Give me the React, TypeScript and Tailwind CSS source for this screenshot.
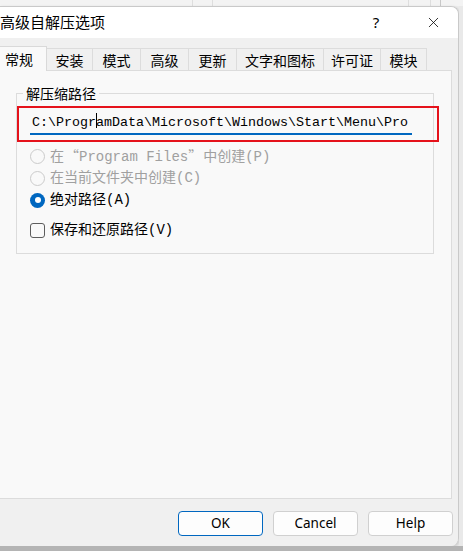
import { X } from "lucide-react";

const tabs = [
  { label: "常规", w: "w-[47px]" },
  { label: "安装", w: "w-[46px]" },
  { label: "模式", w: "w-[48px]" },
  { label: "高级", w: "w-[48px]" },
  { label: "更新", w: "w-[48px]" },
  { label: "文字和图标", w: "w-[87px]" },
  { label: "许可证", w: "w-[57px]" },
  { label: "模块", w: "w-[46px]" },
];

const RadioDot = ({ checked, disabled }: { checked?: boolean; disabled?: boolean }) =>
  checked ? (
    <span className="w-[15px] h-[15px] rounded-full bg-[#0067c0] flex items-center justify-center shrink-0">
      <span className="w-[6px] h-[6px] rounded-full bg-white" />
    </span>
  ) : (
    <span
      className={
        disabled
          ? "w-[15px] h-[15px] rounded-full border border-[#cbcbcb] bg-[#f9f9f9] shrink-0"
          : "w-[15px] h-[15px] rounded-full border border-[#5d5d5d] shrink-0"
      }
    />
  );

const Button = ({ label, primary }: { label: string; primary?: boolean }) => (
  <button
    className={
      primary
        ? "w-[85px] h-[25px] rounded-[4px] border border-[#0067c0] bg-[#fdfdfd] text-[13.5px] text-black"
        : "w-[85px] h-[25px] rounded-[4px] border border-[#d0d0d0] bg-[#fdfdfd] text-[13.5px] text-black"
    }
  >
    {label}
  </button>
);

export default function App() {
  return (
    <div className="w-[463px] h-[551px] overflow-hidden bg-[#ececec] flex flex-col font-['Noto_Sans','Noto_Sans_CJK_SC',sans-serif]">
      {/* window behind the dialog */}
      <div className="h-[6px] flex bg-[#f3f3f3] shrink-0">
        <div className="w-[192px]" />
        <div className="w-[20px] border-l border-[#dedede]" />
        <div className="w-[196px] border-l border-[#dedede]" />
        <div className="w-[22px] border-l border-[#dedede]" />
        <div className="w-[10px] border-l border-[#dedede]" />
        <div className="flex-1 border-l border-[#c8c8c8]" />
      </div>

      <div className="flex shrink-0">
        <div className="w-[459px] h-[540px] flex flex-col rounded-tr-[8px] rounded-br-[8px] border-t border-r border-[#c9c9c9] overflow-hidden shadow-[1px_1px_3px_rgba(0,0,0,0.15)]">
          {/* title bar */}
          <div className="h-[31px] bg-white flex items-center shrink-0">
            <span className="text-[15px] text-black font-['Noto_Sans_CJK_SC',sans-serif]">高级自解压选项</span>
            <span className="ml-auto text-[15px] text-black w-[20px] text-center">?</span>
            <span className="w-[72px] flex justify-center pl-[22px]">
              <X size={17} strokeWidth={1.1} className="text-black" />
            </span>
          </div>

          {/* body */}
          <div className="flex-1 bg-[#f0f0f0] flex flex-col font-['Noto_Sans_CJK_SC',sans-serif] text-[14px]">
            <div className="h-[32px] flex items-end shrink-0">
              {tabs.map((t, i) =>
                i === 0 ? (
                  <div
                    key={t.label}
                    className={`${t.w} h-[25px] -mb-px z-10 bg-[#f9f9f9] border-t border-r border-[#d9d9d9] flex items-center pl-[5px] leading-none text-black`}
                  >
                    {t.label}
                  </div>
                ) : (
                  <div
                    key={t.label}
                    className={`${t.w} h-[22px] bg-[#f0f0f0] border-t border-r border-[#dcdcdc] flex items-center justify-center leading-none text-black`}
                  >
                    {t.label}
                  </div>
                )
              )}
            </div>

            {/* tab panel */}
            <div className="w-[452px] h-[429px] bg-[#f9f9f9] border-t border-r border-b border-[#dcdcdc] shrink-0 pt-[12px] pl-[16px]">
              <fieldset className="w-[418px] min-w-0 border border-[#dcdcdc] pb-[12px]">
                <legend className="ml-[6px] px-[3px] leading-[20px] text-black">解压缩路径</legend>
                <div className="mt-[3px] w-[422px] h-[36px] border-2 border-[#e5121b] pl-[11px] pt-[5px]">
                  <div className="w-[382px] h-[22px] border-b-2 border-[#0067c0] pl-[2px] font-['Liberation_Mono',monospace] text-[13.33px] leading-[20px] text-black whitespace-nowrap overflow-hidden">
                    C:\Progr
                    <span className="inline-block w-px h-[15px] bg-black -mr-px align-[-2px]" />
                    amData\Microsoft\Windows\Start\Menu\Pro
                  </div>
                </div>
                <div className="mt-[3px] font-['Liberation_Mono','Noto_Sans_CJK_SC',monospace] text-[14px]">
                  <div className="h-[22px] flex items-center gap-[5px] pl-[13px] text-[#a0a0a0] whitespace-nowrap">
                    <RadioDot disabled />
                    <span>
                      在<span className="inline-block w-[15px] text-right font-['Noto_Sans_CJK_SC',sans-serif]">“</span>Program Files<span className="inline-block w-[15px] text-left font-['Noto_Sans_CJK_SC',sans-serif]">”</span>中创建(P)
                    </span>
                  </div>
                  <div className="h-[22px] flex items-center gap-[5px] pl-[13px] text-[#a0a0a0]">
                    <RadioDot disabled />
                    <span>在当前文件夹中创建(C)</span>
                  </div>
                  <div className="h-[22px] flex items-center gap-[5px] pl-[13px] text-black">
                    <RadioDot checked />
                    <span>绝对路径(A)</span>
                  </div>
                  <div className="mt-[8px] h-[22px] flex items-center gap-[5px] pl-[13px]">
                    <span className="w-[15px] h-[15px] rounded-[3px] border border-[#5d5d5d] bg-[#f9f9f9]" />
                    <span className="text-black">保存和还原路径(V)</span>
                  </div>
                </div>
              </fieldset>
            </div>

            {/* footer */}
            <div className="flex-1 flex justify-end items-start gap-[10px] pt-[12px] pr-[5px] font-['Noto_Sans',sans-serif]">
              <Button label="OK" primary />
              <Button label="Cancel" />
              <Button label="Help" />
            </div>
          </div>
        </div>
        <div className="flex-1 bg-[#e9e9e9]" />
      </div>

      <div className="flex-1 bg-[#b4b4b4]" />
    </div>
  );
}
